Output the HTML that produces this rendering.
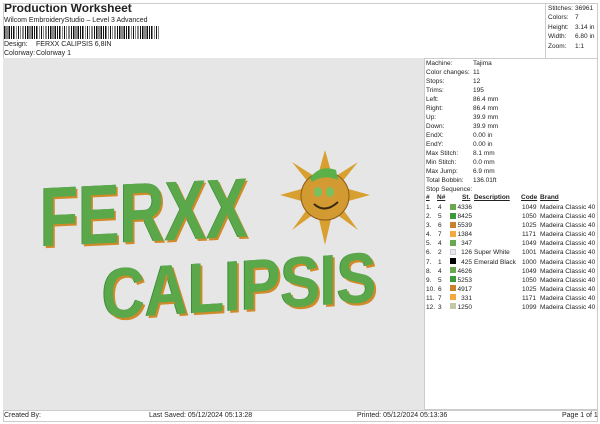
<!DOCTYPE html>
<html><head><style>
*{margin:0;padding:0;box-sizing:border-box}
body{width:600px;height:424px;background:#fff;font-family:"Liberation Sans",sans-serif;font-size:7px;color:#222;position:relative;overflow:hidden}
.a{position:absolute;white-space:nowrap}
.gray{position:absolute;left:3px;top:58px;width:421px;height:352px;background:#e6e6e6}
.rp{position:absolute;left:424px;top:58px;width:174px;height:352px;border:1px solid #ccc}
.sw{position:absolute;left:450px;width:6px;height:6px}
.word{position:absolute;font-family:"Liberation Sans",sans-serif;font-weight:900;color:#5aa84a;text-shadow:2px 2px 0 #d08a2a,-1px 0 0 #3d8c3a;line-height:1}
.t{font-size:6.5px}
</style></head><body>
<div class="a" style="left:4px;top:1px;font-size:12px;font-weight:bold">Production Worksheet</div>
<div class="a" style="left:4px;top:17px;font-size:7px">Wilcom EmbroideryStudio – Level 3 Advanced</div>
<div class="a" style="left:4px;top:26px;width:155px;height:13px;background:repeating-linear-gradient(90deg,#111 0 1.3px,#fff 1.3px 2.6px,#111 2.6px 3.4px,#fff 3.4px 4.6px)"></div>
<div class="a" style="left:4px;top:41px">Design:</div><div class="a" style="left:36px;top:41px">FERXX CALIPSIS 6,8IN</div>
<div class="a" style="left:4px;top:50px">Colorway:</div><div class="a" style="left:36px;top:50px">Colorway 1</div>
<div class="a" style="left:3px;top:3px;width:595px;height:55px;border:1px solid #ccc;border-bottom:none"></div>
<div class="a" style="left:545px;top:3px;width:53px;height:55px;border-left:1px solid #ccc"></div>
<div class="a t" style="left:548px;top:4px;line-height:9.4px">Stitches:<br>Colors:<br>Height:<br>Width:<br>Zoom:</div>
<div class="a t" style="left:575px;top:4px;line-height:9.4px">36961<br>7<br>3.14 in<br>6.80 in<br>1:1</div>
<div class="gray"></div>
<div class="rp"></div>
<div class="a t" style="left:426px;top:59px;line-height:9px">Machine:<br>Color changes:<br>Stops:<br>Trims:<br>Left:<br>Right:<br>Up:<br>Down:<br>EndX:<br>EndY:<br>Max Stitch:<br>Min Stitch:<br>Max Jump:<br>Total Bobbin:<br>Stop Sequence:</div>
<div class="a t" style="left:473px;top:59px;line-height:9px">Tajima<br>11<br>12<br>195<br>86.4 mm<br>86.4 mm<br>39.9 mm<br>39.9 mm<br>0.00 in<br>0.00 in<br>8.1 mm<br>0.0 mm<br>6.9 mm<br>136.01ft</div>
<div class="a t" style="left:426px;top:194px;font-weight:bold;text-decoration:underline">#</div>
<div class="a t" style="left:437px;top:194px;font-weight:bold;text-decoration:underline">N#</div>
<div class="a t" style="left:462px;top:194px;font-weight:bold;text-decoration:underline">St.</div>
<div class="a t" style="left:474px;top:194px;font-weight:bold;text-decoration:underline">Description</div>
<div class="a t" style="left:521px;top:194px;font-weight:bold;text-decoration:underline">Code</div>
<div class="a t" style="left:540px;top:194px;font-weight:bold;text-decoration:underline">Brand</div>
<div class="a t" style="left:426px;top:203px;line-height:9.1px">1.<br>2.<br>3.<br>4.<br>5.<br>6.<br>7.<br>8.<br>9.<br>10.<br>11.<br>12.</div>
<div class="a t" style="left:438px;top:203px;line-height:9.1px">4<br>5<br>6<br>7<br>4<br>2<br>1<br>4<br>5<br>6<br>7<br>3</div>
<div class="a t" style="left:457px;top:203px;line-height:9.1px;text-align:right;width:15px">4336<br>8425<br>5539<br>1384<br>347<br>126<br>425<br>4626<br>5253<br>4917<br>331<br>1250</div>
<div class="a t" style="left:474px;top:203px;line-height:9.1px"><br><br><br><br><br>Super White<br>Emerald Black</div>
<div class="a t" style="left:522px;top:203px;line-height:9.1px">1049<br>1050<br>1025<br>1171<br>1049<br>1001<br>1000<br>1049<br>1050<br>1025<br>1171<br>1099</div>
<div class="a t" style="left:540px;top:203px;line-height:9.1px">Madeira Classic 40<br>Madeira Classic 40<br>Madeira Classic 40<br>Madeira Classic 40<br>Madeira Classic 40<br>Madeira Classic 40<br>Madeira Classic 40<br>Madeira Classic 40<br>Madeira Classic 40<br>Madeira Classic 40<br>Madeira Classic 40<br>Madeira Classic 40</div>
<div class="sw" style="top:204px;background:#6aa84f"></div>
<div class="sw" style="top:213px;background:#3c9a3c"></div>
<div class="sw" style="top:222px;background:#c9822a"></div>
<div class="sw" style="top:231px;background:#f2aa40"></div>
<div class="sw" style="top:240px;background:#6aa84f"></div>
<div class="sw" style="top:249px;background:#e4e6f2;border:1px solid #ccc"></div>
<div class="sw" style="top:258px;background:#000"></div>
<div class="sw" style="top:267px;background:#6aa84f"></div>
<div class="sw" style="top:276px;background:#3c9a3c"></div>
<div class="sw" style="top:285px;background:#c9822a"></div>
<div class="sw" style="top:294px;background:#f2aa40"></div>
<div class="sw" style="top:303px;background:#c3c8a8"></div>
<div class="word" style="left:40px;top:175px;font-size:78px;transform:scale(0.8,1.08) skewY(-2deg);transform-origin:left top">FERXX</div>
<div class="word" style="left:102px;top:260px;font-size:62px;transform:scale(0.96,1.15) skewY(-3deg);transform-origin:left top">CALIPSIS</div>
<svg class="a" style="left:280px;top:150px" width="90" height="95" viewBox="0 0 90 95">
<g fill="#d8a030">
<polygon points="45,0 52,25 38,25"/><polygon points="90,45 65,52 65,38"/><polygon points="45,95 38,65 52,65"/><polygon points="0,45 25,38 25,52"/>
<polygon points="78,12 62,32 56,26"/><polygon points="78,80 56,64 62,58"/><polygon points="12,80 28,58 34,64"/><polygon points="12,12 34,26 28,32"/>
</g>
<circle cx="45" cy="46" r="24" fill="#d49a32" stroke="#8a5a18" stroke-width="1"/>
<path d="M30 28 Q40 14 56 20 L58 30 Q44 24 32 32Z" fill="#5bb04a"/>
<ellipse cx="38" cy="42" rx="4" ry="5" fill="#7ac060"/><ellipse cx="50" cy="42" rx="4" ry="5" fill="#7ac060"/>
<path d="M34 54 Q45 64 58 52" stroke="#3a2a10" stroke-width="2" fill="none"/>
</svg>
<div class="a" style="left:3px;top:410px;width:595px;height:12px;border:1px solid #ccc"></div>
<div class="a" style="left:4px;top:412px">Created By:</div>
<div class="a" style="left:149px;top:412px">Last Saved: 05/12/2024 05:13:28</div>
<div class="a" style="left:357px;top:412px">Printed: 05/12/2024 05:13:36</div>
<div class="a" style="left:562px;top:412px">Page 1 of 1</div>
</body></html>
